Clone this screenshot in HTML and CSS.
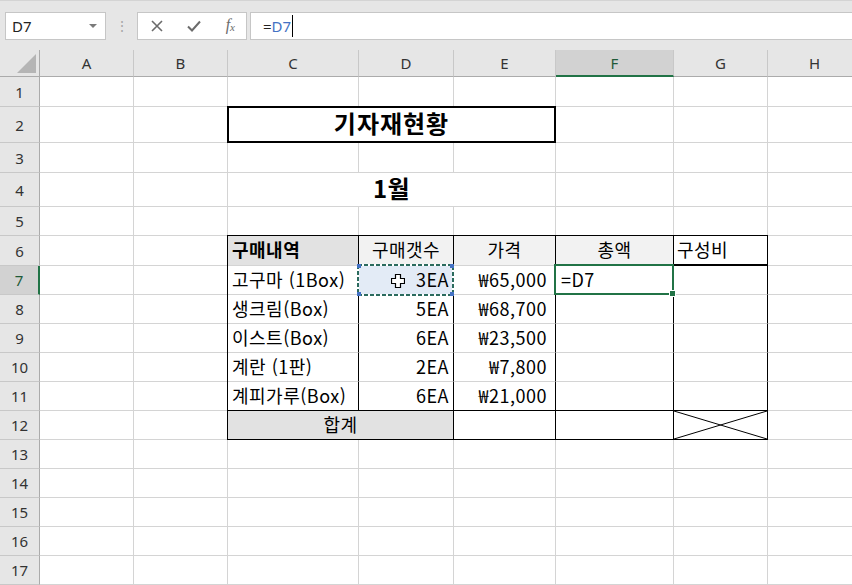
FILE: index.html
```html
<!DOCTYPE html>
<html lang="ko">
<head>
<meta charset="UTF-8" />
<meta name="viewport" content="width=device-width, initial-scale=1.0"/>
<title>기자재현황</title>
<link rel="stylesheet" href="styles.css">
</head>
<body>
  <div class="topbar">
    <div class="namebox">
      <span>D7</span>
      <span class="drop"></span>
    </div>
    <div class="dots">⋮</div>
    <div class="btns">
      <svg width="12" height="12" viewBox="0 0 12 12"><path d="M1 1L11 11M11 1L1 11" stroke="#6b6b6b" stroke-width="1.6"/></svg>
      <svg width="14" height="12" viewBox="0 0 14 12"><path d="M1 6.5L5 10.5L13 1.5" stroke="#6b6b6b" stroke-width="2" fill="none"/></svg>
      <span class="fx">f<sub>x</sub></span>
    </div>
    <div class="formula">=<span class="ref-txt">D7</span><span class="caret"></span></div>
  </div>

  <div class="sheet">
    <!-- 열 머리글 -->
    <div class="corner"><span class="tri"></span></div>
    <div class="ch">A</div>
    <div class="ch">B</div>
    <div class="ch">C</div>
    <div class="ch">D</div>
    <div class="ch">E</div>
    <div class="ch cur">F</div>
    <div class="ch">G</div>
    <div class="ch">H</div>

    <!-- 1 -->
    <div class="rh">1</div>
    <div class="c"></div><div class="c"></div><div class="c"></div><div class="c"></div>
    <div class="c"></div><div class="c"></div><div class="c"></div><div class="c"></div>

    <!-- 2 -->
    <div class="rh">2</div>
    <div class="c"></div><div class="c"></div>
    <div class="c title span3">기자재현황</div>
    <div class="c"></div><div class="c"></div><div class="c"></div>

    <!-- 3 -->
    <div class="rh">3</div>
    <div class="c"></div><div class="c"></div><div class="c"></div><div class="c"></div>
    <div class="c"></div><div class="c"></div><div class="c"></div><div class="c"></div>

    <!-- 4 -->
    <div class="rh">4</div>
    <div class="c"></div><div class="c"></div>
    <div class="c month span3">1월</div>
    <div class="c"></div><div class="c"></div><div class="c"></div>

    <!-- 5 -->
    <div class="rh">5</div>
    <div class="c"></div><div class="c"></div><div class="c"></div><div class="c"></div>
    <div class="c"></div><div class="c"></div><div class="c"></div><div class="c"></div>

    <!-- 6 -->
    <div class="rh">6</div>
    <div class="c"></div><div class="c"></div>
    <div class="c t tl tt head">구매내역</div>
    <div class="c t tt sub">구매갯수</div>
    <div class="c t tt sub">가격</div>
    <div class="c t tt sub">총액</div>
    <div class="c t tt g6">구성비</div>
    <div class="c"></div>

    <!-- 7 -->
    <div class="rh cur">7</div>
    <div class="c"></div><div class="c"></div>
    <div class="c t tl">고구마 (1Box)</div>
    <div class="c t num ref">
      <svg class="ants" width="97" height="32" viewBox="0 0 97 32">
        <rect x="1" y="1" width="95" height="30" fill="none" stroke="#fff" stroke-width="2"/>
        <rect x="1" y="1" width="95" height="30" fill="none" stroke="#2b6b5e" stroke-width="2" stroke-dasharray="4 2"/>
        <rect x="0" y="0" width="4" height="4" fill="#4472c4"/>
        <rect x="93" y="0" width="4" height="4" fill="#4472c4"/>
        <rect x="0" y="28" width="4" height="4" fill="#4472c4"/>
        <rect x="93" y="28" width="4" height="4" fill="#4472c4"/>
      </svg>
      <svg class="cross" width="14" height="14" viewBox="0 0 14 14">
        <path d="M4.5 0.5H9.5V4.5H13.5V9.5H9.5V13.5H4.5V9.5H0.5V4.5H4.5Z" fill="#fff" stroke="#000" stroke-width="1.2"/>
      </svg>
      3EA
    </div>
    <div class="c t won">₩65,000</div>
    <div class="c t active">=D7<span class="handle"></span></div>
    <div class="c t"></div>
    <div class="c"></div>

    <!-- 8 -->
    <div class="rh">8</div>
    <div class="c"></div><div class="c"></div>
    <div class="c t tl">생크림(Box)</div>
    <div class="c t num">5EA</div>
    <div class="c t won">₩68,700</div>
    <div class="c t"></div>
    <div class="c t"></div>
    <div class="c"></div>

    <!-- 9 -->
    <div class="rh">9</div>
    <div class="c"></div><div class="c"></div>
    <div class="c t tl">이스트(Box)</div>
    <div class="c t num">6EA</div>
    <div class="c t won">₩23,500</div>
    <div class="c t"></div>
    <div class="c t"></div>
    <div class="c"></div>

    <!-- 10 -->
    <div class="rh">10</div>
    <div class="c"></div><div class="c"></div>
    <div class="c t tl">계란 (1판)</div>
    <div class="c t num">2EA</div>
    <div class="c t won">₩7,800</div>
    <div class="c t"></div>
    <div class="c t"></div>
    <div class="c"></div>

    <!-- 11 -->
    <div class="rh">11</div>
    <div class="c"></div><div class="c"></div>
    <div class="c t tl tb">계피가루(Box)</div>
    <div class="c t tb num">6EA</div>
    <div class="c t tb won">₩21,000</div>
    <div class="c t tb"></div>
    <div class="c t tb"></div>
    <div class="c"></div>

    <!-- 12 -->
    <div class="rh">12</div>
    <div class="c"></div><div class="c"></div>
    <div class="c t tl tb total span2">합계</div>
    <div class="c t tb"></div>
    <div class="c t tb"></div>
    <div class="c t tb cross-cell">
      <svg width="100%" height="100%" preserveAspectRatio="none" viewBox="0 0 100 100">
        <path d="M0 0L100 100M0 100L100 0" stroke="#000" stroke-width="1" vector-effect="non-scaling-stroke"/>
      </svg>
    </div>
    <div class="c"></div>

    <!-- 13 ~ 17 -->
    <div class="rh">13</div>
    <div class="c"></div><div class="c"></div><div class="c"></div><div class="c"></div>
    <div class="c"></div><div class="c"></div><div class="c"></div><div class="c"></div>
    <div class="rh">14</div>
    <div class="c"></div><div class="c"></div><div class="c"></div><div class="c"></div>
    <div class="c"></div><div class="c"></div><div class="c"></div><div class="c"></div>
    <div class="rh">15</div>
    <div class="c"></div><div class="c"></div><div class="c"></div><div class="c"></div>
    <div class="c"></div><div class="c"></div><div class="c"></div><div class="c"></div>
    <div class="rh">16</div>
    <div class="c"></div><div class="c"></div><div class="c"></div><div class="c"></div>
    <div class="c"></div><div class="c"></div><div class="c"></div><div class="c"></div>
    <div class="rh">17</div>
    <div class="c"></div><div class="c"></div><div class="c"></div><div class="c"></div>
    <div class="c"></div><div class="c"></div><div class="c"></div><div class="c"></div>
  </div>
</body>
</html>
```

FILE: styles.css
```css
body {
  margin: 0;
  width: 852px;
  height: 585px;
  overflow: hidden;
  background: #fff;
  font-family: "Noto Sans", sans-serif;
}

/* 수식 입력줄 */
.topbar {
  height: 50px;
  box-sizing: border-box;
  background: #e6e6e6;
  border-top: 1px solid #d4d4d4;
  display: flex;
  align-items: flex-start;
  padding-top: 11px;
}
.namebox {
  margin-left: 5px;
  width: 101px;
  height: 28px;
  box-sizing: border-box;
  background: #fff;
  border: 1px solid #c6c6c6;
  display: flex;
  align-items: center;
  justify-content: space-between;
  padding: 0 6px 0 6px;
  font-size: 15px;
  color: #222;
}
.drop {
  width: 0;
  height: 0;
  border-left: 4px solid transparent;
  border-right: 4px solid transparent;
  border-top: 4px solid #7a7a7a;
  margin-right: 2px;
}
.dots {
  width: 31px;
  text-align: center;
  color: #a8a8a8;
  font-size: 14px;
  line-height: 28px;
}
.btns {
  width: 110px;
  height: 28px;
  box-sizing: border-box;
  background: #fff;
  border: 1px solid #c6c6c6;
  display: flex;
  align-items: center;
  justify-content: space-between;
  padding: 0 11px 0 13px;
}
.fx {
  font-family: "Liberation Serif", serif;
  font-style: italic;
  font-size: 16px;
  color: #6b6b6b;
  margin-top: -3px;
}
.fx sub {
  font-size: 11px;
  vertical-align: -1px;
}
.formula {
  margin-left: 3px;
  flex: 1;
  height: 28px;
  box-sizing: border-box;
  background: #fff;
  border: 1px solid #c6c6c6;
  border-right: none;
  display: flex;
  align-items: center;
  padding-left: 12px;
  font-size: 15px;
  color: #222;
}
.ref-txt {
  color: #4472c4;
}
.caret {
  width: 1px;
  height: 22px;
  background: #000;
  margin-left: 1px;
}

/* 시트 */
.sheet {
  display: grid;
  grid-template-columns: 40px 94px 94px 131px 95px 102px 118px 94px 94px;
  grid-template-rows: 27px 30px 36px 30px 34px 29px 30px repeat(11, 29px);
  font-family: "Noto Sans CJK KR", "Noto Sans", sans-serif;
  font-size: 18px;
  letter-spacing: 0.5px;
  color: #000;
}
.corner {
  background: #e6e6e6;
  border-right: 1px solid #ababab;
  border-bottom: 1px solid #ababab;
  position: relative;
}
.tri {
  position: absolute;
  right: 3px;
  bottom: 3px;
  width: 0;
  height: 0;
  border-left: 19px solid transparent;
  border-bottom: 19px solid #b5b5b5;
}
.ch {
  background: #e6e6e6;
  border-right: 1px solid #c8c8c8;
  border-bottom: 1px solid #ababab;
  display: flex;
  align-items: center;
  justify-content: center;
  font-family: "Noto Sans", sans-serif;
  font-size: 15px;
  letter-spacing: 0;
  color: #333;
}
.ch.cur {
  background: #d2d2d2;
  border-bottom: 2px solid #217346;
  color: #1f5a38;
}
.rh {
  background: #e6e6e6;
  border-right: 1px solid #ababab;
  border-bottom: 1px solid #c8c8c8;
  display: flex;
  align-items: center;
  justify-content: center;
  font-family: "Noto Sans", sans-serif;
  font-size: 15px;
  letter-spacing: 0;
  color: #333;
}
.rh.cur {
  background: #d2d2d2;
  border-right: 2px solid #217346;
  color: #1f5a38;
}
.c {
  border-right: 1px solid #d4d4d4;
  border-bottom: 1px solid #d4d4d4;
  display: flex;
  align-items: center;
  padding: 0 4px 3px 4px;
  white-space: nowrap;
  min-width: 0;
}
.span3 {
  grid-column: span 3;
}
.span2 {
  grid-column: span 2;
}
.title {
  margin: -1px 0 0 -1px;
  border: 2px solid #000;
  justify-content: center;
  font-weight: bold;
  font-size: 24px;
  letter-spacing: 1px;
  padding-bottom: 5px;
}
.month {
  justify-content: center;
  font-weight: bold;
  font-size: 24px;
  padding-bottom: 5px;
}

/* 표 테두리 */
.t {
  border-right-color: #000;
}
.tl {
  box-shadow: -1px 0 0 #000;
}
.tt {
  box-shadow: 0 -1px 0 #000;
}
.tl.tt {
  box-shadow: -1px 0 0 #000, 0 -1px 0 #000, -1px -1px 0 #000;
}
.tb {
  border-bottom-color: #000;
}
.head {
  background: #e2e2e2;
  font-weight: bold;
}
.sub {
  background: #f2f2f2;
  justify-content: center;
}
.g6 {
  border-bottom: 2px solid #000;
  padding-left: 3px;
}
.num {
  justify-content: flex-end;
}
.won {
  justify-content: flex-end;
  padding-right: 8px;
}
.total {
  background: #e2e2e2;
  justify-content: center;
}
.cross-cell {
  padding: 0;
}

/* 참조 셀 / 활성 셀 */
.ref {
  position: relative;
  background: #e3ebf6;
}
.ants {
  position: absolute;
  left: -2px;
  top: -2px;
}
.cross {
  position: absolute;
  left: 32px;
  top: 8px;
}
.active {
  position: relative;
  padding-left: 5px;
}
.active::before {
  content: "";
  position: absolute;
  left: -2px;
  top: -2px;
  right: -1px;
  bottom: -1px;
  border: 2px solid #217346;
}
.handle {
  position: absolute;
  right: -3px;
  bottom: -3px;
  width: 5px;
  height: 5px;
  background: #217346;
  border: 1px solid #fff;
}
```
